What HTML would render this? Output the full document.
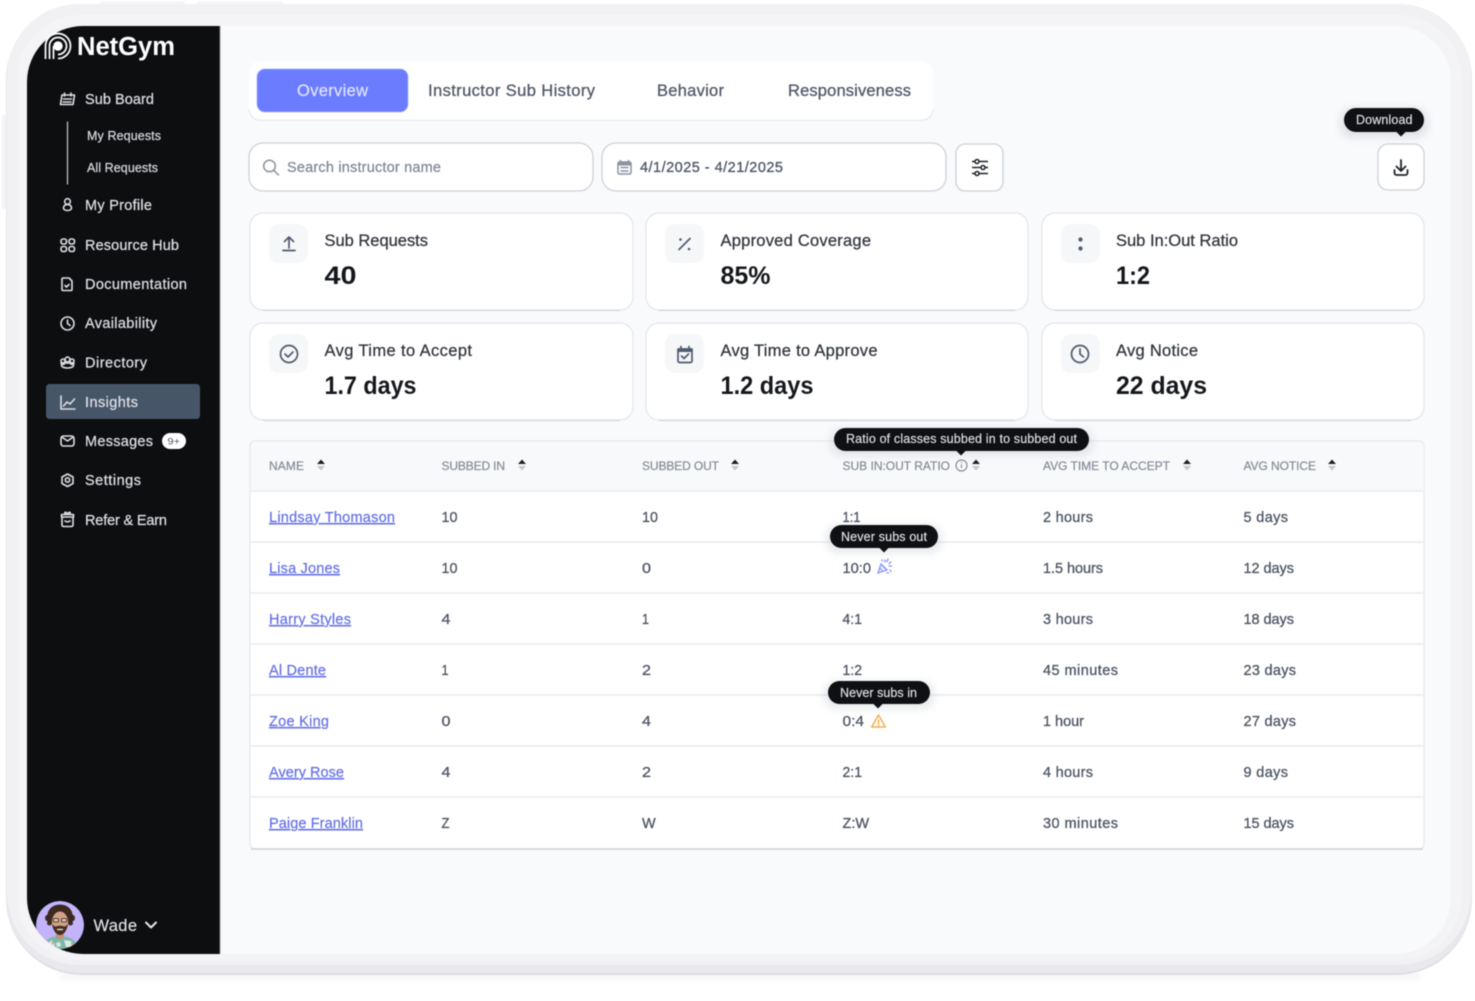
<!DOCTYPE html>
<html lang="en"><head><meta charset="utf-8"><title>NetGym Insights</title>
<style>
html,body{margin:0;padding:0;background:#fff;width:1475px;height:1001px;overflow:hidden}
svg{display:block;filter:blur(.5px)}
text{font-family:"Liberation Sans",sans-serif;white-space:pre}
.nav{font-size:14.5px;fill:#dcdfe4;stroke:#dcdfe4;stroke-width:.25px}
.sub{font-size:12.5px;fill:#d4d7dc;stroke:#d4d7dc;stroke-width:.25px}
.tab{font-size:16.5px;fill:#515a69;stroke:#515a69;stroke-width:.3px}
.ct{font-size:16.5px;fill:#30353e;stroke:#30353e;stroke-width:.25px}
.cv{font-size:25px;font-weight:700;fill:#14171c}
.th{font-size:12px;fill:#7f8795;stroke:#7f8795;stroke-width:.15px}
.td{font-size:14.5px;fill:#4d5665;stroke:#4d5665;stroke-width:.3px}
.lk{font-size:14.5px;fill:#6471e6;stroke:#6471e6;stroke-width:.2px;text-decoration:underline}
.tip{font-size:12.5px;fill:#dfe1e5;stroke:#dfe1e5;stroke-width:.15px}
.card{fill:#fff;stroke:#e3e5e9;stroke-width:1.2}
.ib{fill:#f6f7f8}
.ic{fill:none;stroke:#4f5b70;stroke-width:1.7;stroke-linecap:round;stroke-linejoin:round}
.ni{fill:none;stroke:#dcdfe4;stroke-width:1.6;stroke-linecap:round;stroke-linejoin:round}
.line{stroke:#eceef2;stroke-width:2}
</style></head>
<body>
<svg width="1475" height="1001" viewBox="0 0 1475 1001" xmlns="http://www.w3.org/2000/svg">
<defs>
<clipPath id="scr"><rect x="27" y="26" width="1424" height="928" rx="56"/></clipPath>
<filter id="sb" x="-5%" y="-300%" width="110%" height="700%"><feGaussianBlur stdDeviation="3"/></filter>
<filter id="ts" x="-20%" y="-50%" width="140%" height="220%"><feGaussianBlur stdDeviation="4"/></filter>
<clipPath id="av"><circle cx="60" cy="925" r="24"/></clipPath>
</defs>

<!-- device -->
<rect x="100" y="1" width="85" height="6" rx="2" fill="#f6f6f8"/>
<rect x="197" y="1" width="85" height="6" rx="2" fill="#f6f6f8"/>
<rect x="2" y="115" width="6" height="94" rx="2" fill="#f3f3f6"/>
<rect x="60" y="974" width="1360" height="4" fill="#c9cad3" filter="url(#sb)" opacity=".28"/>
<rect x="6" y="4" width="1466" height="971" rx="76" fill="#dcdce3"/>
<rect x="6" y="4" width="1466" height="969" rx="75" fill="#e8e8ed"/>
<rect x="7" y="4" width="1464" height="961" rx="72" fill="#f1f1f4"/>
<rect x="17" y="15" width="1445" height="945" rx="64" fill="#f4f4f6"/>

<g clip-path="url(#scr)">
<rect x="27" y="26" width="1424" height="928" fill="#f9fafc"/>
<rect x="27" y="26" width="193" height="928" fill="#0d0e10"/>
<rect x="219.500" y="26" width="1" height="928" fill="#8b8d92"/>
</g>

<!-- logo -->
<g fill="none" stroke="#fff" stroke-width="1.700">
<path d="M45.500 59V46A12.500 12.500 0 1 1 58 58.500"/>
<path d="M49.500 59V46A8.500 8.500 0 1 1 58 54.500"/>
<path d="M53.500 59V46"/>
</g>
<circle cx="58" cy="46" r="4.700" fill="#fff"/>
<text x="77" y="55" font-size="25.500" font-weight="700" fill="#fff" textLength="98" lengthAdjust="spacingAndGlyphs">NetGym</text>

<!-- nav -->
<g class="ni">
<path d="M62 95h12.500l-1.500 9.500H60.500zM64.500 93v3M71 93v3M63.500 99h8M63 102h8"/>
<path d="M67.500 122v62" stroke="#c9cbd0" stroke-width="1.200"/>
<circle cx="67.500" cy="201.500" r="2.800"/><path d="M67.500 204.500c-2.500 0-4 1.500-4 3.200 0 1.700 1.500 2.800 4 2.800s4-1.100 4-2.800c0-1.700-1.500-3.200-4-3.200z"/>
<rect x="61" y="239" width="5.500" height="5" rx="2"/><rect x="69" y="239" width="5.500" height="5" rx="2"/><rect x="61" y="246.500" width="5.500" height="5" rx="2"/><rect x="69" y="246.500" width="5.500" height="5" rx="2"/>
<path d="M63 278h6l3 3v8.500a1 1 0 0 1-1 1h-8a1 1 0 0 1-1-1v-10.500a1 1 0 0 1 1-1zM65 285.500l1.500 1.500 2.500-2.500"/>
<circle cx="67.500" cy="323.500" r="6.500"/><path d="M67.500 320v3.500l2.500 2"/>
<circle cx="67.500" cy="359.500" r="2.400"/><circle cx="63" cy="361" r="2"/><circle cx="72" cy="361" r="2"/><path d="M61 363.500c1 .5 2 1 3 .8M74 363.500c-1 .5-2 1-3 .8"/><ellipse cx="67.500" cy="365.500" rx="6" ry="2.500"/>
</g>
<rect x="46" y="384" width="154" height="35" rx="3.500" fill="#475569"/>
<g class="ni">
<path d="M61 396v13h14"/><path d="M63.500 406l3.500-4 3 2 4.500-5"/>
<rect x="61" y="436" width="13" height="10" rx="2.500"/><path d="M62.500 437.500l5 3.500 5-3.500"/>
<path d="M67.500 474l5.500 3v6.500l-5.500 3-5.500-3V477z"/><circle cx="67.500" cy="480" r="2.200"/>
<path d="M62 517h11v8a1.500 1.500 0 0 1-1.500 1.500h-8a1.500 1.500 0 0 1-1.500-1.500zM61.500 514.500h12v2.500h-12zM65.500 514.500c-2-3 1-3 2 0c1-3 4-3 2 0M65 521c1.500 1 3.500 1 5 0"/>
</g>
<text class="nav" x="85" y="104" textLength="69">Sub Board</text>
<text class="sub" x="87" y="140" textLength="74">My Requests</text>
<text class="sub" x="87" y="172" textLength="71">All Requests</text>
<text class="nav" x="85" y="210" textLength="67">My Profile</text>
<text class="nav" x="85" y="250" textLength="94">Resource Hub</text>
<text class="nav" x="85" y="289" textLength="102">Documentation</text>
<text class="nav" x="85" y="328" textLength="72">Availability</text>
<text class="nav" x="85" y="367.500" textLength="62">Directory</text>
<text class="nav" x="85" y="407" textLength="53">Insights</text>
<text class="nav" x="85" y="446" textLength="68">Messages</text>
<rect x="162" y="433" width="24" height="16" rx="8" fill="#fff"/>
<text x="167.500" y="444.500" font-size="9.500" fill="#4b5563" textLength="12.500" lengthAdjust="spacingAndGlyphs">9+</text>
<text class="nav" x="85" y="485" textLength="56">Settings</text>
<text class="nav" x="85" y="525" textLength="82">Refer &amp; Earn</text>

<!-- avatar -->
<g clip-path="url(#scr)">
<g clip-path="url(#av)">
<circle cx="60" cy="925" r="24" fill="#c3b3fb"/>
<path d="M41 950c1-9 9-14 19-14s18 5 19 14z" fill="#7db8ad"/>
<path d="M47 944l5-4 3 5-4 3zM64 940l7 1 1 6-6 0zM56 943l4-1 1 4-4 1z" fill="#dfeadf"/>
<path d="M51 941l3 1-1 3zM70 944l3-1 1 3z" fill="#d99a8a"/>
<path d="M56 930h8v7l-4 3-4-3z" fill="#c39278"/>
<ellipse cx="60" cy="915" rx="12.500" ry="10.500" fill="#3c2a20"/>
<circle cx="48.500" cy="918" r="3.500" fill="#3c2a20"/><circle cx="71.500" cy="918" r="3.500" fill="#3c2a20"/>
<circle cx="49.500" cy="923" r="2.500" fill="#3c2a20"/><circle cx="70.500" cy="923" r="2.500" fill="#3c2a20"/>
<ellipse cx="60" cy="922" rx="8" ry="10.500" fill="#d2a288"/>
<path d="M52 924c1 7 4.500 11 8 11s7-4 8-11c-2 2-3 2.500-4 2.500-2-1-6-1-8 0-1 0-2-.5-4-2.500z" fill="#46301f"/>
<path d="M57 929.500h6" stroke="#f3e9e2" stroke-width="1.200"/>
<rect x="53.500" y="918.500" width="5" height="3.500" rx="1" fill="#e2c4b2" stroke="#2d201a" stroke-width=".8"/>
<rect x="61.500" y="918.500" width="5" height="3.500" rx="1" fill="#e2c4b2" stroke="#2d201a" stroke-width=".8"/>
</g>
</g>
<text x="93.500" y="931" font-size="16.500" fill="#dcdfe4" stroke="#dcdfe4" stroke-width=".2" textLength="43.500">Wade</text>
<path d="M146 922.500l5 5 5-5" fill="none" stroke="#e4e6ea" stroke-width="2" stroke-linecap="round" stroke-linejoin="round"/>

<!-- tabs -->
<rect x="249" y="61" width="684" height="59" rx="12" fill="#fff"/>
<path d="M261 120.300h660q10 0 12-10" fill="none" stroke="#e6e8ec" stroke-width="1.200"/>
<path d="M249 109q1 11 12 11.300" fill="none" stroke="#e6e8ec" stroke-width="1.200"/>
<rect x="257" y="69" width="151" height="43" rx="8" fill="#6b7cff" stroke="#a5b0ff" stroke-width=".8"/>
<text x="297" y="96" font-size="16.500" fill="#dfe3ff" stroke="#dfe3ff" stroke-width=".2" textLength="71">Overview</text>
<text class="tab" x="428" y="96" textLength="167">Instructor Sub History</text>
<text class="tab" x="657" y="96" textLength="67">Behavior</text>
<text class="tab" x="788" y="96" textLength="123">Responsiveness</text>

<!-- filters -->
<rect x="249" y="143" width="344" height="48" rx="14" fill="#fff" stroke="#cdd1d8" stroke-width="1.300"/>
<circle cx="269.500" cy="166" r="5.800" fill="none" stroke="#8a92a0" stroke-width="1.500"/>
<path d="M274 170.500l4.500 4.500" stroke="#8a92a0" stroke-width="1.500" stroke-linecap="round"/>
<text x="287" y="172" font-size="14.500" fill="#7d8594" stroke="#7d8594" stroke-width=".2" textLength="154">Search instructor name</text>
<rect x="602" y="143" width="344" height="48" rx="14" fill="#fff" stroke="#cdd1d8" stroke-width="1.300"/>
<g fill="none" stroke="#8a93a3" stroke-width="1.500"><rect x="618" y="162" width="13" height="12" rx="1.500"/><path d="M620.500 160v3M628.500 160v3M620.500 167.500h8M620.500 171h8"/></g>
<path d="M618 162h13v3.500h-13z" fill="#8a93a3"/>
<text x="640" y="172" font-size="14.500" fill="#4d5665" stroke="#4d5665" stroke-width=".3" textLength="143">4/1/2025 - 4/21/2025</text>
<rect x="956" y="144" width="47" height="47" rx="9" fill="#fff" stroke="#cdd1d8" stroke-width="1.300"/>
<g fill="#fff" stroke="#1f2329" stroke-width="1.500"><path d="M972 161.500h16M972 167.500h16M972 173.500h16"/><circle cx="977" cy="161.500" r="2"/><circle cx="983" cy="167.500" r="2"/><circle cx="977" cy="173.500" r="2"/></g>
<rect x="1378" y="144" width="46" height="46" rx="10" fill="#fff" stroke="#cdd1d8" stroke-width="1.300"/>
<path d="M1401 160v11M1396.500 166.500l4.500 4.500 4.500-4.500M1394.500 170v3a2 2 0 0 0 2 2h9a2 2 0 0 0 2-2v-3" fill="none" stroke="#1f2329" stroke-width="1.800" stroke-linecap="round" stroke-linejoin="round"/>

<!-- cards -->
<g>
<rect class="card" x="250" y="213" width="383" height="97" rx="13"/>
<rect class="card" x="646" y="213" width="382" height="97" rx="13"/>
<rect class="card" x="1042" y="213" width="382" height="97" rx="13"/>
<rect class="card" x="250" y="323" width="383" height="97" rx="13"/>
<rect class="card" x="646" y="323" width="382" height="97" rx="13"/>
<rect class="card" x="1042" y="323" width="382" height="97" rx="13"/>
<path d="M263 310.500h357M659 310.500h356M1055 310.500h356M263 420.500h357M659 420.500h356M1055 420.500h356" stroke="#cfd2d8" stroke-width="1"/>
<rect class="ib" x="269" y="224" width="39" height="39" rx="10"/>
<rect class="ib" x="665" y="224" width="39" height="39" rx="10"/>
<rect class="ib" x="1061" y="224" width="39" height="39" rx="10"/>
<rect class="ib" x="269" y="334" width="39" height="39" rx="10"/>
<rect class="ib" x="665" y="334" width="39" height="39" rx="10"/>
<rect class="ib" x="1061" y="334" width="39" height="39" rx="10"/>
</g>
<path class="ic" d="M289 248v-10M284.500 241.500l4.500-4.500 4.500 4.500M283 250.500h12"/>
<path class="ic" d="M679 249.500l11-11" stroke-width="1.500"/><circle cx="680.500" cy="239.500" r="1.300" fill="#4f5b70"/><circle cx="689" cy="249" r="1.300" fill="#4f5b70"/>
<circle cx="1080.500" cy="239.500" r="2.100" fill="#4f5b70"/><circle cx="1080.500" cy="248.500" r="2.100" fill="#4f5b70"/>
<circle class="ic" cx="289" cy="354" r="8.500"/><path class="ic" d="M285 354l3 3 5-5"/>
<path class="ic" d="M678 349h14v12a1.500 1.500 0 0 1-1.500 1.500h-11a1.500 1.500 0 0 1-1.500-1.500zM681 346.500v3M689 346.500v3M681.500 356l2.500 2.500 4.500-4.500"/><path d="M678 348.500h14v3.500h-14z" fill="#4f5b70"/>
<circle class="ic" cx="1080" cy="354" r="8.500"/><path class="ic" d="M1080 349v5l3.500 3"/>

<text class="ct" x="324.500" y="246" textLength="103.500">Sub Requests</text>
<text class="cv" x="324.500" y="284" textLength="32" lengthAdjust="spacingAndGlyphs">40</text>
<text class="ct" x="720.500" y="246" textLength="150.500">Approved Coverage</text>
<text class="cv" x="720.500" y="284" textLength="50" lengthAdjust="spacingAndGlyphs">85%</text>
<text class="ct" x="1116" y="246" textLength="122">Sub In:Out Ratio</text>
<text class="cv" x="1116" y="284" textLength="34" lengthAdjust="spacingAndGlyphs">1:2</text>
<text class="ct" x="324.500" y="356" textLength="147.500">Avg Time to Accept</text>
<text class="cv" x="324.500" y="394" textLength="92" lengthAdjust="spacingAndGlyphs">1.7 days</text>
<text class="ct" x="720.500" y="356" textLength="157">Avg Time to Approve</text>
<text class="cv" x="720.500" y="394" textLength="93" lengthAdjust="spacingAndGlyphs">1.2 days</text>
<text class="ct" x="1116" y="356" textLength="82">Avg Notice</text>
<text class="cv" x="1116" y="394" textLength="91" lengthAdjust="spacingAndGlyphs">22 days</text>

<!-- table -->
<rect x="250" y="441" width="1174" height="408" rx="5" fill="#fff" stroke="#e4e6ea" stroke-width="1.200"/>
<path d="M250.600 491V446a4.500 4.500 0 0 1 4.500-4.500h1164.300a4.500 4.500 0 0 1 4.500 4.500V491z" fill="#f8f9fb"/>
<path class="line" d="M251 491h1172M251 542h1172M251 593h1172M251 644h1172M251 695h1172M251 746h1172M251 797h1172"/>
<path d="M251 849h1172" stroke="#cfd2d8" stroke-width="1.500"/>

<text class="th" x="269" y="470" textLength="35">NAME</text>
<text class="th" x="441.500" y="470" textLength="63.500">SUBBED IN</text>
<text class="th" x="642" y="470" textLength="77">SUBBED OUT</text>
<text class="th" x="842.500" y="470" textLength="107.500">SUB IN:OUT RATIO</text>
<text class="th" x="1043" y="470" textLength="127">AVG TIME TO ACCEPT</text>
<text class="th" x="1243.500" y="470" textLength="72.500">AVG NOTICE</text>
<g>
<path d="M317 464l4-4.500 4 4.500z" fill="#1c1f24"/><path d="M317 466l4 4.500 4-4.500z" fill="#c4c7cd"/>
<path d="M518 464l4-4.500 4 4.500z" fill="#1c1f24"/><path d="M518 466l4 4.500 4-4.500z" fill="#c4c7cd"/>
<path d="M731 464l4-4.500 4 4.500z" fill="#1c1f24"/><path d="M731 466l4 4.500 4-4.500z" fill="#c4c7cd"/>
<path d="M972 464l4-4.500 4 4.500z" fill="#1c1f24"/><path d="M972 466l4 4.500 4-4.500z" fill="#c4c7cd"/>
<path d="M1183 464l4-4.500 4 4.500z" fill="#1c1f24"/><path d="M1183 466l4 4.500 4-4.500z" fill="#c4c7cd"/>
<path d="M1328 464l4-4.500 4 4.500z" fill="#1c1f24"/><path d="M1328 466l4 4.500 4-4.500z" fill="#c4c7cd"/>
</g>
<circle cx="961.500" cy="465.500" r="5.500" fill="none" stroke="#868e9c" stroke-width="1.200"/>
<path d="M961.500 464.500v3.500M961.500 462v1" stroke="#868e9c" stroke-width="1.200"/>

<text class="lk" x="269" y="522" textLength="126">Lindsay Thomason</text>
<text class="td" x="441.500" y="522" textLength="16" lengthAdjust="spacingAndGlyphs">10</text>
<text class="td" x="642" y="522" textLength="16" lengthAdjust="spacingAndGlyphs">10</text>
<text class="td" x="842.500" y="522" textLength="18" lengthAdjust="spacingAndGlyphs">1:1</text>
<text class="td" x="1043" y="522" textLength="50">2 hours</text>
<text class="td" x="1243.500" y="522" textLength="44.500">5 days</text>

<text class="lk" x="269" y="573" textLength="71">Lisa Jones</text>
<text class="td" x="441.500" y="573" textLength="16" lengthAdjust="spacingAndGlyphs">10</text>
<text class="td" x="642" y="573" textLength="9" lengthAdjust="spacingAndGlyphs">0</text>
<text class="td" x="842.500" y="573" textLength="28.500" lengthAdjust="spacingAndGlyphs">10:0</text>
<text class="td" x="1043" y="573" textLength="60">1.5 hours</text>
<text class="td" x="1243.500" y="573" textLength="50.500">12 days</text>

<text class="lk" x="269" y="624" textLength="82">Harry Styles</text>
<text class="td" x="441.500" y="624" textLength="9" lengthAdjust="spacingAndGlyphs">4</text>
<text class="td" x="642" y="624" textLength="7" lengthAdjust="spacingAndGlyphs">1</text>
<text class="td" x="842.500" y="624" textLength="19.500" lengthAdjust="spacingAndGlyphs">4:1</text>
<text class="td" x="1043" y="624" textLength="50">3 hours</text>
<text class="td" x="1243.500" y="624" textLength="50.500">18 days</text>

<text class="lk" x="269" y="675" textLength="57">Al Dente</text>
<text class="td" x="441.500" y="675" textLength="7" lengthAdjust="spacingAndGlyphs">1</text>
<text class="td" x="642" y="675" textLength="9" lengthAdjust="spacingAndGlyphs">2</text>
<text class="td" x="842.500" y="675" textLength="19.500" lengthAdjust="spacingAndGlyphs">1:2</text>
<text class="td" x="1043" y="675" textLength="75">45 minutes</text>
<text class="td" x="1243.500" y="675" textLength="52.500">23 days</text>

<text class="lk" x="269" y="726" textLength="60">Zoe King</text>
<text class="td" x="441.500" y="726" textLength="9" lengthAdjust="spacingAndGlyphs">0</text>
<text class="td" x="642" y="726" textLength="9" lengthAdjust="spacingAndGlyphs">4</text>
<text class="td" x="842.500" y="726" textLength="21.500" lengthAdjust="spacingAndGlyphs">0:4</text>
<text class="td" x="1043" y="726" textLength="41">1 hour</text>
<text class="td" x="1243.500" y="726" textLength="52.500">27 days</text>

<text class="lk" x="269" y="777" textLength="75">Avery Rose</text>
<text class="td" x="441.500" y="777" textLength="9" lengthAdjust="spacingAndGlyphs">4</text>
<text class="td" x="642" y="777" textLength="9" lengthAdjust="spacingAndGlyphs">2</text>
<text class="td" x="842.500" y="777" textLength="19.500" lengthAdjust="spacingAndGlyphs">2:1</text>
<text class="td" x="1043" y="777" textLength="50">4 hours</text>
<text class="td" x="1243.500" y="777" textLength="44.500">9 days</text>

<text class="lk" x="269" y="828" textLength="94">Paige Franklin</text>
<text class="td" x="441.500" y="828" textLength="8" lengthAdjust="spacingAndGlyphs">Z</text>
<text class="td" x="642" y="828" textLength="13">W</text>
<text class="td" x="842.500" y="828" textLength="26.500">Z:W</text>
<text class="td" x="1043" y="828" textLength="75">30 minutes</text>
<text class="td" x="1243.500" y="828" textLength="50.500">15 days</text>

<!-- confetti -->
<g fill="none" stroke="#8a94fb" stroke-width="1.300" stroke-linecap="round">
<path d="M881 564l-3 9 9-3zM882.500 566l3 3M880 568l2.500 3"/>
<path d="M885 560v2M888 559l-1 2.500M891 562l-2 1.500M889 566h2.500M890 570l1 1.500M887 573h1.500M882 560l.5 1"/>
</g>
<!-- warning -->
<path d="M878.500 715l6.800 12h-13.600zM878.500 720v3.500M878.500 725.200v.3" fill="none" stroke="#f5ae4c" stroke-width="1.500" stroke-linejoin="round" stroke-linecap="round"/>

<!-- tooltips -->
<rect x="1340" y="108" width="88" height="30" rx="12" fill="#9aa0aa" opacity=".25" filter="url(#ts)"/>
<rect x="1344" y="108" width="80" height="24" rx="12" fill="#0e1014"/>
<path d="M1396 131.500l5 5 5-5z" fill="#0e1014"/>
<text class="tip" x="1356" y="124" textLength="56.500">Download</text>

<rect x="830" y="428" width="263" height="28" rx="12" fill="#9aa0aa" opacity=".22" filter="url(#ts)"/>
<rect x="834" y="428" width="255" height="23" rx="11.500" fill="#0e1014"/>
<path d="M956 450.500l5 5 5-5z" fill="#0e1014"/>
<text class="tip" x="846" y="443" textLength="231">Ratio of classes subbed in to subbed out</text>

<rect x="826" y="525" width="116" height="28" rx="12" fill="#9aa0aa" opacity=".22" filter="url(#ts)"/>
<rect x="830" y="525" width="108" height="23" rx="11.500" fill="#0e1014"/>
<path d="M879 547.500l5 5 5-5z" fill="#0e1014"/>
<text class="tip" x="841" y="541" textLength="86">Never subs out</text>

<rect x="824" y="681" width="110" height="28" rx="12" fill="#9aa0aa" opacity=".22" filter="url(#ts)"/>
<rect x="828" y="681" width="102" height="23" rx="11.500" fill="#0e1014"/>
<path d="M873 703.500l5 5 5-5z" fill="#0e1014"/>
<text class="tip" x="840" y="697" textLength="77">Never subs in</text>
</svg>
</body></html>
